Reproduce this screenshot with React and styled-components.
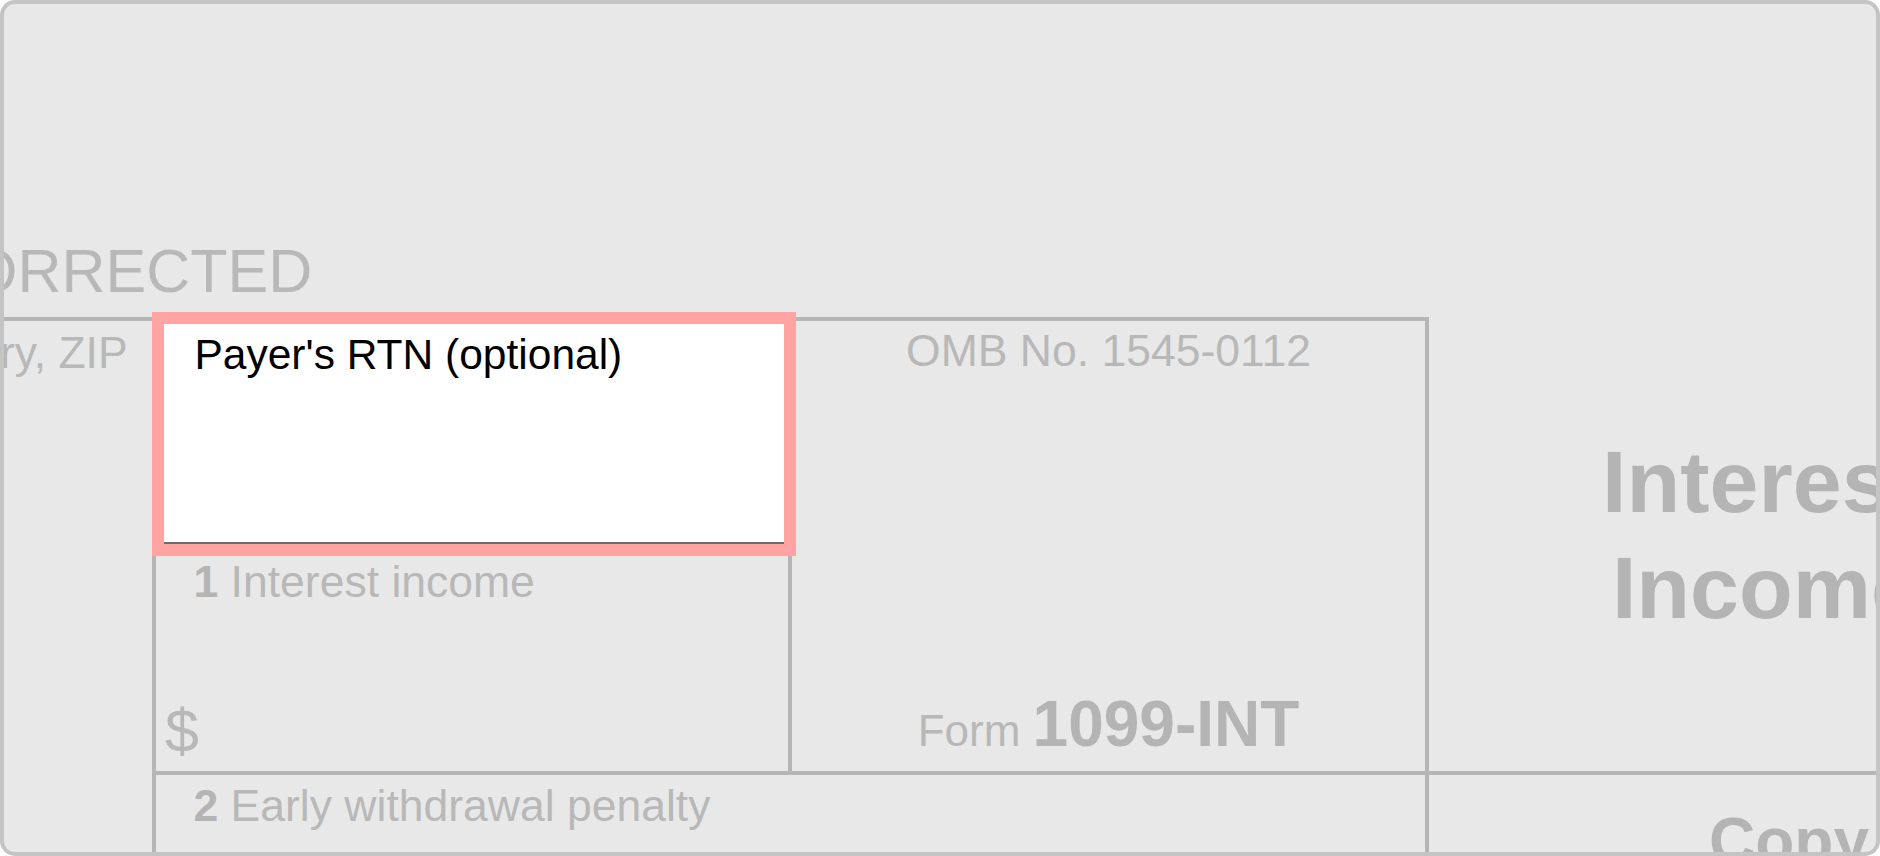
import React from 'react';
import styled, { createGlobalStyle } from 'styled-components';

const Global = createGlobalStyle`
  html, body { margin: 0; padding: 0; background: #ffffff; }
  body { font-family: "Liberation Sans", Arial, Helvetica, sans-serif; }
  #root { width: 1880px; height: 856px; }
`;

const LINE = '4px solid #b5b5b5';

const Frame = styled.div`
  box-sizing: border-box;
  width: 1880px;
  height: 856px;
  border: 4px solid #c4c4c4;
  border-radius: 15px;
  background: #e8e8e8;
  overflow: hidden;
`;

const Form = styled.div`
  display: grid;
  grid-template-columns: 1494px 636px 637px 520px;
  grid-template-rows: 317px 231px 223px 200px;
  margin-left: -1342px;
  width: max-content;
  color: #b8b8b8;
  font-family: "Liberation Sans", Arial, Helvetica, sans-serif;
`;

const Cell = styled.div`
  box-sizing: border-box;
  min-width: 0;
  grid-column: ${p => p.$col};
  grid-row: ${p => p.$row};
  border-right: ${p => (p.$right ? LINE : 'none')};
  border-bottom: ${p => (p.$bottom ? LINE : 'none')};
`;

const Header = styled(Cell)`
  display: flex;
  align-items: flex-end;
  padding: 0 0 15px 1264px;
`;

const Corrected = styled.span`
  font-size: 61px;
  line-height: 1;
  white-space: nowrap;
`;

const Label = styled.div`
  font-size: 44.5px;
  line-height: 50px;
  white-space: nowrap;
  padding-left: ${p => p.$indent || 0}px;
`;

const BoxNum = styled.b`
  font-weight: 700;
  color: #b4b4b4;
`;

const PayerCell = styled(Cell)`
  padding: 7px 0 0 23.5px;
`;

const RtnCell = styled(Cell)`
  display: flex;
  padding: 3px 4px 4px 8px;
`;

const Field = styled.div`
  position: relative;
  z-index: 1;
  flex: 1;
  box-sizing: border-box;
  background: #ffffff;
  border-bottom: 2px solid #6b6b6b;
  outline: 12px solid #ffa3a3;
  padding: 5.5px 0 0 30.5px;
  color: #000000;
  font-size: 42.5px;
  line-height: 50px;
  white-space: nowrap;
`;

const OmbCell = styled(Cell)`
  display: flex;
  flex-direction: column;
  justify-content: space-between;
  align-items: center;
  padding: 5px 0 15px;
`;

const FormId = styled.div`
  font-size: 64px;
  line-height: 1;
  white-space: nowrap;
`;

const FormWord = styled.span`
  font-size: 44px;
  line-height: 1;
`;

const FormNum = styled.b`
  font-weight: 700;
  color: #b4b4b4;
`;

const AmountCell = styled(Cell)`
  display: flex;
  flex-direction: column;
  justify-content: space-between;
  padding: 5px 0 9px 9px;
`;

const Dollar = styled.div`
  font-size: 61px;
  line-height: 1;
`;

const PenaltyCell = styled(Cell)`
  padding: 6px 0 0 37.5px;
`;

const TitleCell = styled(Cell)`
  padding: 107.5px 29px 0 0;
  text-align: right;
  font-size: 88px;
  line-height: 106px;
  font-weight: 700;
  color: #b4b4b4;
  white-space: nowrap;
`;

const CopyCell = styled(Cell)`
  padding: 30px 0 0 280px;
  font-size: 64px;
  line-height: 1.15;
  font-weight: 700;
  color: #b4b4b4;
  white-space: nowrap;
`;

export default function App() {
  return (
    <>
      <Global />
      <Frame>
        <Form>
          <Header $col="1 / 4" $row="1" $bottom>
            <Corrected>CORRECTED</Corrected>
          </Header>

          <PayerCell $col="1" $row="2 / 5" $right>
            <Label>
              Payer's name, street address, city or town, state or province, country, ZIP
            </Label>
            <Label>or foreign postal code, and telephone no.</Label>
          </PayerCell>

          <RtnCell $col="2" $row="2" $right $bottom>
            <Field>Payer's RTN (optional)</Field>
          </RtnCell>

          <OmbCell $col="3" $row="2 / 4" $right $bottom>
            <Label>OMB No. 1545-0112</Label>
            <FormId>
              <FormWord>Form </FormWord>
              <FormNum>1099-INT</FormNum>
            </FormId>
          </OmbCell>

          <TitleCell $col="4" $row="2 / 4" $bottom>
            Interest
            <br />
            Income
          </TitleCell>

          <AmountCell $col="2" $row="3" $right $bottom>
            <Label $indent={28.5}>
              <BoxNum>1</BoxNum> Interest income
            </Label>
            <Dollar>$</Dollar>
          </AmountCell>

          <PenaltyCell $col="2 / 4" $row="4" $right>
            <Label>
              <BoxNum>2</BoxNum> Early withdrawal penalty
            </Label>
          </PenaltyCell>

          <CopyCell $col="4" $row="4">
            Copy B
          </CopyCell>
        </Form>
      </Frame>
    </>
  );
}
